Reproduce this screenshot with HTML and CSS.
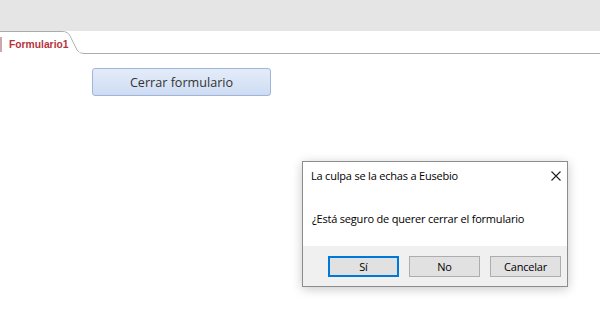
FILE: index.html
```html
<!DOCTYPE html>
<html lang="es">
<head>
<meta charset="UTF-8" />
<title>Formulario1</title>
<link rel="stylesheet" href="styles.css">
</head>
<body>

  <div class="ribbon"></div>

  <div class="tab-strip">
    <svg class="tab-shape" width="600" height="24" viewBox="0 0 600 24">
      <path d="M0 0.5 H62 Q68 0.5 70 5 L77 19 Q79 22.5 84 22.5 H600" fill="none" stroke="#a7adb3" stroke-width="1"/>
      <path d="M0 1 H62 Q67.5 1 69.5 5.5 L76.5 19.5 Q78.5 22 84 22 H0 Z" fill="#fff"/>
    </svg>
    <div class="tab">
      <span class="tab-mark"></span>
      <span class="tab-label">Formulario1</span>
    </div>
  </div>

  <main class="form-body">
    <button type="button" class="close-form">Cerrar formulario</button>
  </main>

  <div class="msgbox" role="dialog">
    <div class="msgbox-title">
      <span>La culpa se la echas a Eusebio</span>
      <svg class="msgbox-x" width="10" height="10" viewBox="0 0 10 10">
        <path d="M0.5 0.5 L9.5 9.5 M9.5 0.5 L0.5 9.5" stroke="#222" stroke-width="1.1"/>
      </svg>
    </div>
    <p class="msgbox-text">¿Está seguro de querer cerrar el formulario</p>
    <div class="msgbox-buttons">
      <button type="button" class="default">Sí</button>
      <button type="button">No</button>
      <button type="button">Cancelar</button>
    </div>
  </div>

</body>
</html>
```

FILE: styles.css
```css
body {
  margin: 0;
  width: 600px;
  height: 326px;
  background: #fff;
  font-family: "Open Sans", "Noto Sans", sans-serif;
  overflow: hidden;
  position: relative;
}
.ribbon {
  height: 31px;
  background: #e5e5e5;
}
.tab-strip {
  display: grid;
  height: 24px;
}
.tab-shape,
.tab {
  grid-area: 1 / 1;
}
.tab {
  display: flex;
  align-items: center;
  height: 22px;
  padding-top: 1px;
}
.tab-mark {
  width: 2px;
  height: 15px;
  margin-top: 2px;
  background: #c9a9ad;
}
.tab-label {
  margin-left: 7px;
  margin-top: 2px;
  font-family: "Liberation Sans", Arial, sans-serif;
  font-weight: bold;
  font-size: 10.3px;
  color: #b7333d;
}
.form-body {
  padding: 13px 0 0 92px;
}
.close-form {
  width: 179px;
  height: 28px;
  border: 1px solid #9fb5dc;
  border-radius: 3px;
  background: linear-gradient(#e4ecf9, #cedcf3);
  font-family: inherit;
  font-size: 12.6px;
  color: #333;
  padding: 0;
}

/* message box */
.msgbox {
  position: absolute;
  left: 302px;
  top: 161px;
  width: 264px;
  border: 1px solid #8c8c8c;
  background: #fff;
  box-shadow: 0 2px 10px rgba(0,0,0,0.22);
  font-size: 11px;
  letter-spacing: -0.2px;
  color: #000;
}
.msgbox-title {
  display: flex;
  justify-content: space-between;
  align-items: center;
  height: 27px;
  padding: 0 6px 0 8px;
}
.msgbox-x {
  margin-top: 1px;
}
.msgbox-text {
  margin: 0;
  padding: 22px 9px 19px;
  line-height: 16px;
}
.msgbox-buttons {
  display: flex;
  justify-content: flex-end;
  gap: 10px;
  background: #f0f0f0;
  padding: 10px 6px 9px;
}
.msgbox-buttons button {
  width: 71px;
  height: 21px;
  border: 1px solid #adadad;
  background: #e1e1e1;
  font-family: inherit;
  font-size: 11px;
  letter-spacing: -0.2px;
  color: #000;
  padding: 0;
}
.msgbox-buttons button.default {
  border: 2px solid #0078d7;
}
```
